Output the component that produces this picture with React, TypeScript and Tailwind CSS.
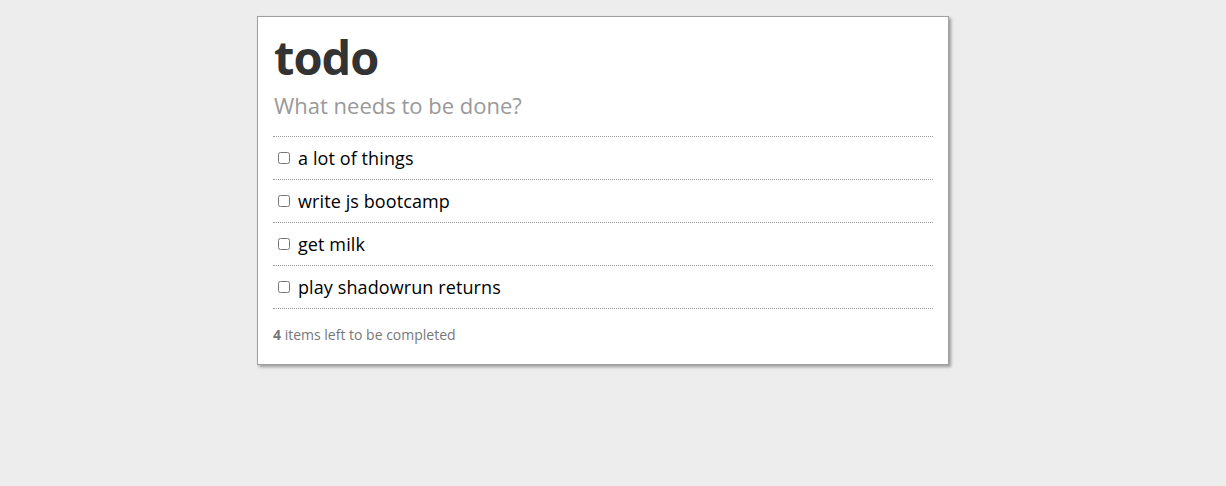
import { useState } from "react";

const initialTodos = [
  { id: 1, text: "a lot of things", done: false },
  { id: 2, text: "write js bootcamp", done: false },
  { id: 3, text: "get milk", done: false },
  { id: 4, text: "play shadowrun returns", done: false },
];

export default function App() {
  const [todos, setTodos] = useState(initialTodos);
  const [draft, setDraft] = useState("");

  const left = todos.filter((t) => !t.done).length;

  const toggle = (id: number) =>
    setTodos((prev) => prev.map((t) => (t.id === id ? { ...t, done: !t.done } : t)));

  return (
    <div
      className="min-h-[486px] bg-[#ededed] pt-4 pl-[257px]"
      style={{ fontFamily: '"Open Sans", "Noto Sans", sans-serif' }}
    >
      <div className="w-[692px] border border-[#a0a0a0] bg-white px-[15px] pt-[12px] pb-[19px] shadow-[2px_2px_3px_rgba(0,0,0,0.35)]">
        <h1 className="text-[47px] font-bold leading-[56px] tracking-[-1px] text-[#333] pl-px">todo</h1>
        <input
          value={draft}
          onChange={(e) => setDraft(e.target.value)}
          placeholder="What needs to be done?"
          className="block h-[52px] w-full pl-px pb-[11px] text-[22px] text-[#333] outline-none placeholder:text-[#999] border-b border-dotted border-[#999]"
        />
        <ul>
          {todos.map((t) => (
            <li key={t.id} className="flex h-[43px] items-center border-b border-dotted border-[#999] pl-[5px]">
              <input
                type="checkbox"
                checked={t.done}
                onChange={() => toggle(t.id)}
                className="m-0 h-[12px] w-[12px] accent-[#888]"
              />
              <span className="ml-[8px] text-[18px] tracking-[0.1px] text-black">{t.text}</span>
            </li>
          ))}
        </ul>
        <p className="mt-[15px] text-[14px] text-[#777]">
          <span className="font-bold">{left}</span> items left to be completed
        </p>
      </div>
    </div>
  );
}
